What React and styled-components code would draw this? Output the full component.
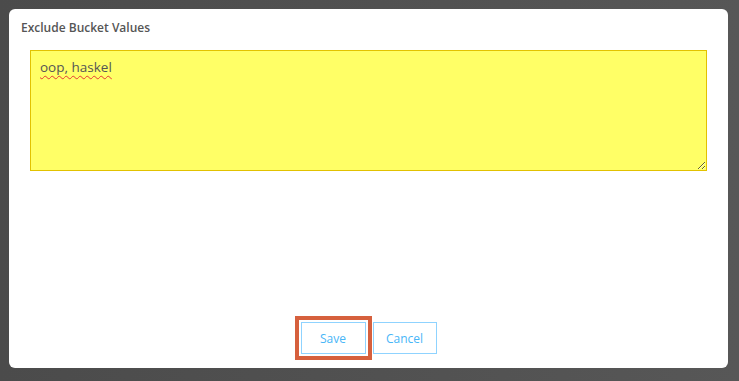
import React from "react";
import styled, { createGlobalStyle } from "styled-components";

const Global = createGlobalStyle`
  html, body { margin: 0; padding: 0; }
  body {
    width: 739px;
    height: 381px;
    overflow: hidden;
    background: #505050;
    font-family: "Open Sans", "DejaVu Sans", sans-serif;
  }
`;

const Backdrop = styled.div`
  width: 739px;
  height: 381px;
  box-sizing: border-box;
  padding: 9px 11px 13px 9px;
  display: flex;
  background: linear-gradient(90deg, #4b4b4b 0%, #525252 60%, #575757 100%);
`;

const Modal = styled.div`
  flex: 1;
  background: #ffffff;
  border-radius: 6px;
  display: flex;
  flex-direction: column;
  padding: 12px 21px 14px 12px;
  box-sizing: border-box;
`;

const Title = styled.h2`
  margin: 0 0 15px 0;
  height: 14px;
  font-size: 12px;
  line-height: 14px;
  font-weight: 600;
  color: #555555;
`;

const Area = styled.textarea`
  margin-left: 9px;
  height: 121px;
  box-sizing: border-box;
  background: #ffff66;
  border: 1px solid #e2c200;
  border-radius: 0;
  padding: 7px 9px;
  font-family: "Open Sans", "DejaVu Sans", sans-serif;
  font-size: 13.5px;
  line-height: 18px;
  color: #555555;
  resize: vertical;
  outline: none;
  text-decoration: underline wavy #e53935;
  text-decoration-thickness: 1px;
  text-underline-offset: 3px;
`;

const Footer = styled.div`
  margin-top: auto;
  display: flex;
  justify-content: center;
  gap: 7px;
  padding-left: 9px;
`;

const Button = styled.button`
  height: 32px;
  width: ${(p) => p.$w}px;
  box-sizing: border-box;
  background: #ffffff;
  border: 1px solid #8fd3ff;
  border-radius: 0;
  color: #48b6f7;
  font-family: "Open Sans", "DejaVu Sans", sans-serif;
  font-size: 12px;
  cursor: pointer;
  outline: ${(p) => (p.$focused ? "4px solid #d6603d" : "none")};
  outline-offset: 2px;
`;

export default function App() {
  return (
    <>
      <Global />
      <Backdrop>
        <Modal>
          <Title>Exclude Bucket Values</Title>
          <Area defaultValue="oop, haskel" spellCheck={false} />
          <Footer>
            <Button $w={65} $focused>
              Save
            </Button>
            <Button $w={64}>Cancel</Button>
          </Footer>
        </Modal>
      </Backdrop>
    </>
  );
}
